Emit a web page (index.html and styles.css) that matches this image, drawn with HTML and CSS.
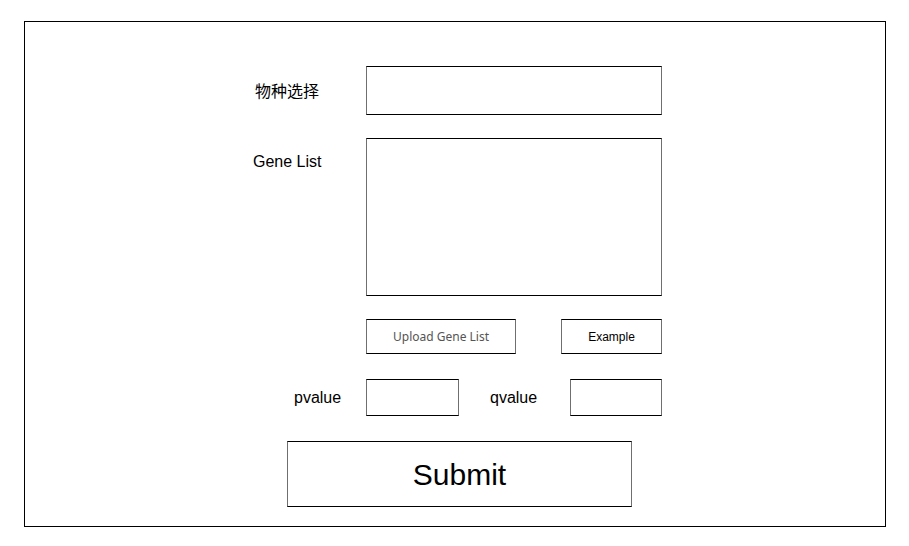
FILE: index.html
```html
<!DOCTYPE html>
<html>
<head>
<meta charset="utf-8">
<link rel="stylesheet" href="styles.css">
</head>
<body>
<div class="frame">
  <div class="row row-species">
    <label class="label label-species">物种选择</label>
    <div class="box box-species"></div>
  </div>
  <div class="row row-genes">
    <label class="label label-genes">Gene List</label>
    <div class="box box-genes"></div>
  </div>
  <div class="row row-buttons">
    <button class="box btn btn-upload">Upload Gene List</button>
    <button class="box btn btn-example">Example</button>
  </div>
  <div class="row row-values">
    <label class="label label-p">pvalue</label>
    <div class="box box-p"></div>
    <label class="label label-q">qvalue</label>
    <div class="box box-q"></div>
  </div>
  <div class="row row-submit">
    <button class="box btn btn-submit">Submit</button>
  </div>
</div>
</body>
</html>
```

FILE: styles.css
```css
* { box-sizing: border-box; }
html, body { margin: 0; padding: 0; background: #fff; }
body {
  font-family: "Liberation Sans", Arial, "Noto Sans CJK SC", sans-serif;
  color: #000;
  padding: 21px 0 0 24px;
}
.frame {
  width: 862px;
  height: 506px;
  border: 1px solid #000;
  display: flex;
  flex-direction: column;
  padding-top: 44px;
}
.row {
  display: flex;
  align-items: center;
}
.box {
  border-top: 1px solid #000;
  border-bottom: 1px solid #000;
  border-left: 1px solid #6f6f6f;
  border-right: 1px solid #6f6f6f;
  background: #fff;
}
.label {
  font-size: 16px;
  line-height: 18px;
}
.row-species { padding-left: 230px; }
.label-species {
  width: 111px;
  font-family: "Noto Sans CJK SC", sans-serif;
  font-size: 16px;
  padding-bottom: 1px;
}
.box-species { width: 296px; height: 49px; }

.row-genes { padding-left: 228px; margin-top: 23px; align-items: flex-start; }
.label-genes { width: 113px; padding-top: 15px; }
.box-genes { width: 296px; height: 158px; }

.row-buttons { padding-left: 341px; margin-top: 23px; }
.btn {
  padding: 0;
  margin: 0;
  font-family: "Liberation Sans", Arial, sans-serif;
  color: #000;
  cursor: pointer;
}
.btn-upload {
  width: 150px;
  height: 35px;
  font-family: "Noto Sans", sans-serif;
  font-size: 12px;
  color: #555;
}
.btn-example {
  width: 101px;
  height: 35px;
  margin-left: 45px;
  font-size: 12px;
}

.row-values { padding-left: 269px; margin-top: 25px; }
.label-p { width: 72px; }
.box-p { width: 93px; height: 37px; }
.label-q { width: 80px; margin-left: 31px; }
.box-q { width: 92px; height: 37px; }

.row-submit { padding-left: 262px; margin-top: 25px; }
.btn-submit {
  width: 345px;
  height: 66px;
  font-size: 30px;
  padding-top: 1px;
}
```
